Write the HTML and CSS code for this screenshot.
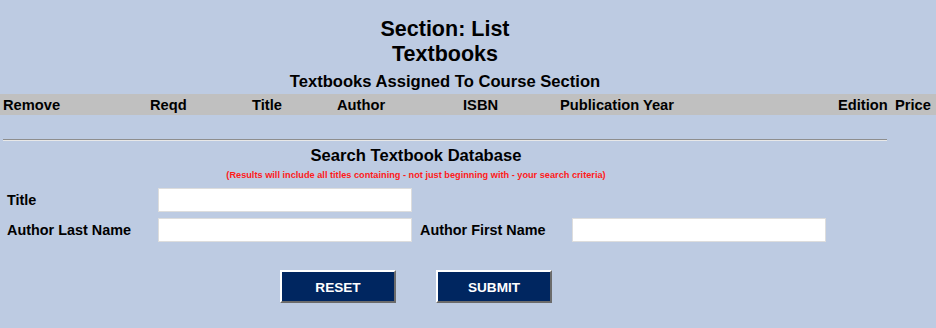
FILE: index.html
```html
<!DOCTYPE html>
<html lang="en">
<head>
    <meta charset="UTF-8">
    <title>Section: List Textbooks</title>
    <link rel="stylesheet" href="styles.css">
</head>
<body>
    <div class="top">
        <h1>Section: List<br>Textbooks</h1>
        <h2>Textbooks Assigned To Course Section</h2>
    </div>

    <div class="assigned">
        <div class="head">
            <div>Remove</div>
            <div>Reqd</div>
            <div>Title</div>
            <div>Author</div>
            <div>ISBN</div>
            <div>Publication Year</div>
            <div>Edition</div>
            <div>Price</div>
        </div>
        <div class="rows"></div>
    </div>

    <div class="top">
        <hr>
    </div>

    <div class="search">
        <h3>Search Textbook Database</h3>
        <p class="note">(Results will include all titles containing - not just beginning with - your search criteria)</p>
        <form class="fields" onsubmit="return false">
            <label for="title">Title</label>
            <input type="text" id="title">
            <span></span>
            <span></span>
            <label for="last">Author Last Name</label>
            <input type="text" id="last">
            <label for="first" class="second">Author First Name</label>
            <input type="text" id="first">
        </form>
        <div class="buttons">
            <button type="reset">RESET</button>
            <button type="submit">SUBMIT</button>
        </div>
    </div>
</body>
</html>
```

FILE: styles.css
```css
body { margin: 0; background: #bdcbe2; font-family: "Liberation Sans", Arial, sans-serif; color: #000; }
.top { width: 890px; text-align: center; }
h1 { margin: 17px 0 0; font-size: 21.5px; line-height: 25px; }
h2 { margin: 6px 0 3px; font-size: 16.6px; line-height: 18px; }

.head { display: grid; grid-template-columns: 147px 102px 85px 126px 97px 278px 57px 44px; background: #c0c0c0; height: 21px; align-items: center; font-size: 14.7px; font-weight: bold; }
.head div { padding-left: 3px; white-space: nowrap; }
.rows { height: 24px; }

hr { margin: 0 3px; height: 0; border: 0; border-top: 1px solid #8e8e8e; border-bottom: 1px solid #e8e8e8; }

.search { width: 832px; text-align: center; }
h3 { margin: 6px 0 0; font-size: 16.6px; line-height: 18px; }
.note { margin: 5px 0 0; color: #ff1a1a; font-size: 9.2px; line-height: 11px; font-weight: bold; }

.fields { display: grid; grid-template-columns: 151px 262px 152px 254px; row-gap: 6px; margin: 7px 0 0; padding-left: 7px; text-align: left; align-items: center; }
.fields label { font-size: 14.4px; font-weight: bold; }
.fields input { box-sizing: border-box; width: 254px; height: 24px; margin: 0; border: 1px solid #ddd; background: #fff; font: 13px "Liberation Sans", Arial, sans-serif; }

.buttons { display: flex; justify-content: center; gap: 40px; margin-top: 28px; }
.buttons button { box-sizing: border-box; width: 116px; height: 33px; padding: 2px 0 0; background: #002660; color: #fff; border: 2px solid; border-color: #fff #6b6b6b #6b6b6b #fff; font: bold 13.6px "Liberation Sans", Arial, sans-serif; cursor: pointer; }
```
